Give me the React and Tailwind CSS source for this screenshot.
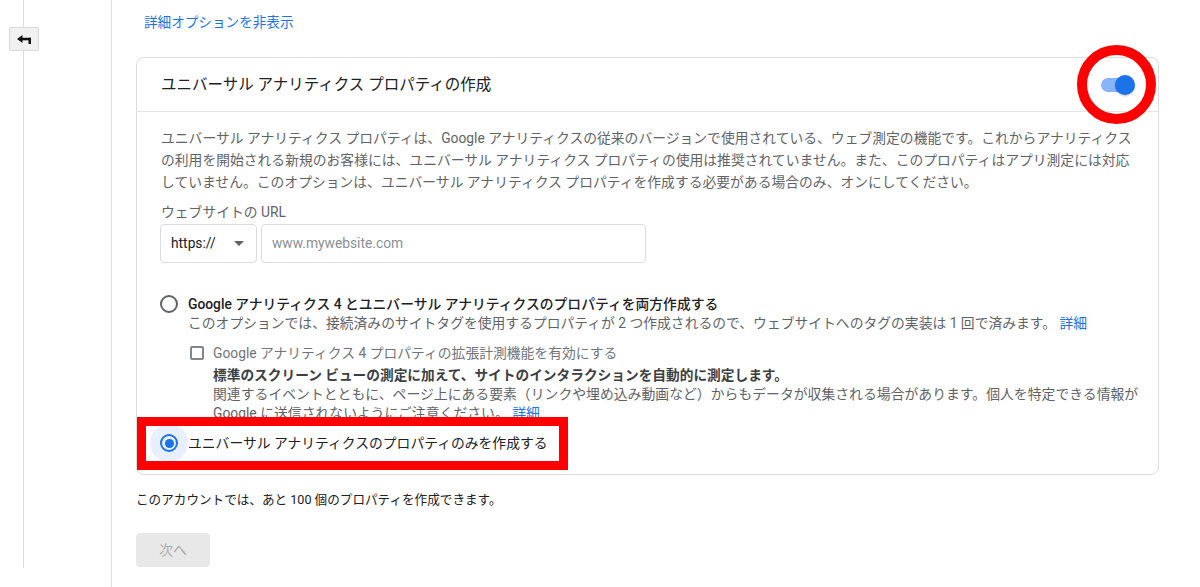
import React from 'react'

const BackIcon = () => (
  <svg width="14" height="9" viewBox="0 0 14 9" fill="#111">
    <path d="M0 4 L5.5 0 L5.5 8 Z" />
    <rect x="5" y="2.8" width="9" height="2.5" />
    <rect x="11.5" y="2.8" width="2.5" height="6.2" />
  </svg>
)

const Radio = ({ checked }) => (
  <div
    className={`w-[38px] h-[38px] -my-[9px] shrink-0 rounded-full flex items-center justify-center ${
      checked ? 'bg-[#e8f0fe]' : ''
    }`}
  >
    <div
      className={`w-[18px] h-[18px] rounded-full border-2 flex items-center justify-center ${
        checked ? 'border-[#1a73e8]' : 'border-[#5f6368]'
      }`}
    >
      {checked && <div className="w-[9px] h-[9px] rounded-full bg-[#1a73e8]" />}
    </div>
  </div>
)

const App = () => {
  return (
    <div className="w-[1200px] h-[587px] flex bg-white overflow-hidden font-[Roboto,'Noto_Sans_CJK_JP',sans-serif] text-[#202124]">
      {/* left rail */}
      <div className="w-[111px] shrink-0 relative">
        <div className="w-[24px] h-[568px] border-r border-[#dcdcdc]" />
        <button className="absolute left-[9px] top-[27px] w-[30px] h-[24px] bg-[#f1f1f1] border border-[#dadada] rounded-[2px] flex items-center justify-center">
          <BackIcon />
        </button>
      </div>

      <div className="flex-1 border-l border-[#e0e0e0] pl-[24px]">
        <div className="mt-[13px] ml-[8px] text-[13.6px] leading-[18px] text-[#1a73e8]">
          詳細オプションを非表示
        </div>

        <div className="relative mt-[26px] w-[1023px] border border-[#dadce0] rounded-[8px]">
          <div className="h-[54px] border-b border-[#e3e4e6] px-[24px] flex items-center justify-between">
            <div className="text-[15.5px] leading-[20px] text-[#202124]">
              ユニバーサル アナリティクス プロパティの作成
            </div>
            <div className="relative w-[34px] h-[20px] -mr-px">
              <div className="absolute left-0 top-[3px] w-[30px] h-[14px] rounded-full bg-[#8ab4f8]" />
              <div className="absolute right-0 top-0 w-[20px] h-[20px] rounded-full bg-[#1a73e8] shadow-[0_1px_2px_rgba(0,0,0,0.25)]" />
            </div>
          </div>

          <div className="pl-[24px] pr-[20px] pt-[15px] pb-[21px]">
            <div className="text-[13.8px] leading-[22px] text-[#5f6368] whitespace-nowrap">
              <div>ユニバーサル アナリティクス プロパティは、Google アナリティクスの従来のバージョンで使用されている、ウェブ測定の機能です。これからアナリティクス</div>
              <div>の利用を開始される新規のお客様には、ユニバーサル アナリティクス プロパティの使用は推奨されていません。また、このプロパティはアプリ測定には対応</div>
              <div>していません。このオプションは、ユニバーサル アナリティクス プロパティを作成する必要がある場合のみ、オンにしてください。</div>
            </div>

            <div className="mt-[10px] text-[13.8px] leading-[18px] text-[#5f6368]">ウェブサイトの URL</div>

            <div className="mt-[3px] flex gap-[4px] -ml-px">
              <div className="w-[97px] h-[39px] border border-[#dadce0] rounded-[4px] flex items-center justify-between pl-[10px] pr-[12px]">
                <span className="text-[13.8px] text-[#202124]">https://</span>
                <svg width="10" height="5" viewBox="0 0 10 5">
                  <path d="M0 0 L10 0 L5 5 Z" fill="#5f6368" />
                </svg>
              </div>
              <div className="w-[385px] h-[39px] border border-[#dadce0] rounded-[4px] flex items-center pl-[10px]">
                <span className="text-[13.8px] text-[#8a8f94]">www.mywebsite.com</span>
              </div>
            </div>

            <div className="mt-[31px] -ml-[11px] flex items-start">
              <Radio checked={false} />
              <div className="flex-1">
                <div className="text-[13.8px] leading-[20px] font-medium text-[#202124]">
                  Google アナリティクス 4 とユニバーサル アナリティクスのプロパティを両方作成する
                </div>
                <div className="text-[13.8px] leading-[19px] text-[#5f6368]">
                  このオプションでは、接続済みのサイトタグを使用するプロパティが 2 つ作成されるので、ウェブサイトへのタグの実装は 1 回で済みます。 <span className="text-[#1a73e8]">詳細</span>
                </div>
                <div className="mt-[10px] flex items-center h-[20px] ml-[2px]">
                  <div className="w-[14px] h-[14px] border-2 border-[#80868b] rounded-[2px]" />
                  <div className="ml-[9px] text-[13.8px] leading-[20px] text-[#70757a]">
                    Google アナリティクス 4 プロパティの拡張計測機能を有効にする
                  </div>
                </div>
                <div className="pl-[25px]">
                  <div className="mt-[2px] text-[13.7px] leading-[20px] font-bold text-[#3c4043]">
                    標準のスクリーン ビューの測定に加えて、サイトのインタラクションを自動的に測定します。
                  </div>
                  <div className="text-[13.85px] leading-[18.5px] text-[#5f6368] whitespace-nowrap">
                    <div>関連するイベントとともに、ページ上にある要素（リンクや埋め込み動画など）からもデータが収集される場合があります。個人を特定できる情報が</div>
                    <div>Google に送信されないようにご注意ください。 <span className="text-[#1a73e8]">詳細</span></div>
                  </div>
                </div>
              </div>
            </div>

            <div className="mt-[11px] -ml-[11px] flex items-start">
              <Radio checked />
              <div className="text-[13.8px] leading-[20px] text-[#202124]">
                ユニバーサル アナリティクスのプロパティのみを作成する
              </div>
            </div>
          </div>

          {/* annotations */}
          <div className="absolute left-0 top-[359px] w-[431px] h-[53px] border-[9px] border-[#ff0000]" />
          <div className="absolute left-[940px] top-[-13px] w-[79px] h-[79px] rounded-full border-[10px] border-[#ff0000]" />
        </div>

        <div className="mt-[16px] text-[12.6px] leading-[18px] text-[#202124]">
          このアカウントでは、あと 100 個のプロパティを作成できます。
        </div>

        <button className="mt-[24px] w-[74px] h-[34px] rounded-[4px] bg-[#e8e8e8] text-[13.8px] text-[#a8a8a8] flex items-center justify-center">
          次へ
        </button>
      </div>
    </div>
  )
}

export default App
